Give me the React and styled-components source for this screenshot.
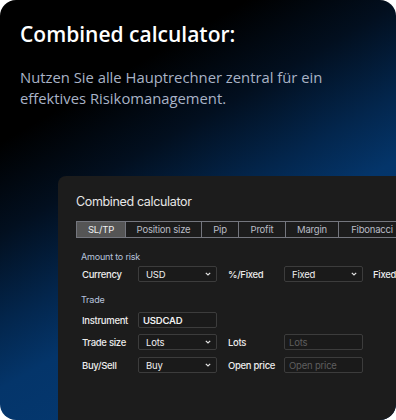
import React from 'react';
import styled, { createGlobalStyle } from 'styled-components';

const Global = createGlobalStyle`
  html, body {
    margin: 0;
    padding: 0;
    background: #ffffff;
  }
`

const Card = styled.div`
  width: 396px;
  height: 420px;
  border-radius: 16px;
  overflow: hidden;
  display: flex;
  flex-direction: column;
  background: linear-gradient(150deg, #000000 22%, #020f1f 36%, #03264d 50%, #04356a 60%, #053d7a 100%);
`

const Intro = styled.div`
  padding: 20px 20px 0 20px;
`

const Heading = styled.h1`
  margin: 0;
  font-family: 'Open Sans', sans-serif;
  font-weight: 600;
  font-size: 21px;
  line-height: 28px;
  color: #ffffff;
`

const Lead = styled.p`
  margin: 19px 0 0 0;
  font-family: 'Open Sans', sans-serif;
  font-size: 14.8px;
  line-height: 21px;
  color: #a9b3c6;
`

const Panel = styled.div`
  margin: 67px 0 0 58px;
  flex: 1;
  width: 400px;
  background: #1c1c1c;
  border-radius: 8px 0 0 0;
  padding: 17px 0 0 18px;
  font-family: 'Inter', sans-serif;
  color: #e4e4e4;
`

const PanelTitle = styled.div`
  font-size: 12.5px;
  letter-spacing: -0.35px;
  color: #e6e6e6;
  line-height: 18px;
`

const Tabs = styled.div`
  display: flex;
  margin-top: 10px;
  border: 1px solid #74767e;
  border-right: none;
  width: max-content;
`

const Tab = styled.div`
  width: ${p => p.w}px;
  height: 15px;
  display: flex;
  align-items: center;
  justify-content: center;
  font-size: 9.5px;
  letter-spacing: -0.2px;
  color: ${p => (p.active ? '#f0f0f0' : '#babdc6')};
  background: ${p => (p.active ? '#555555' : 'transparent')};
  border-right: 1px solid #74767e;
`

const Section = styled.div`
  margin: ${p => p.top}px 0 0 5px;
  font-size: 9px;
  letter-spacing: -0.2px;
  color: #b7c3dc;
  line-height: 12px;
`

const Row = styled.div`
  display: grid;
  grid-template-columns: 56px 90px 56px 89px auto;
  align-items: center;
  margin: ${p => p.top}px 0 0 6px;
  height: 16px;
`

const Label = styled.span`
  font-size: 9.5px;
  font-weight: 500;
  letter-spacing: -0.3px;
  color: #ececec;
  white-space: nowrap;
`

const Box = styled.div`
  box-sizing: border-box;
  width: 79px;
  height: 16px;
  border: 1px solid #3c3c3c;
  border-radius: 2px;
  background: #1a1a1a;
  display: flex;
  align-items: center;
  justify-content: space-between;
  padding: 0 5px 0 ${p => (p.input ? 4 : 7)}px;
  font-size: 9.5px;
  letter-spacing: -0.2px;
  color: ${p => (p.placeholder ? '#5e5e5e' : '#f0f0f0')};
  font-weight: ${p => (p.strong ? 600 : 400)};
`

const Chevron = () => (
  <svg width="6" height="4" viewBox="0 0 6 4">
    <polyline points="0.8,0.8 3,3 5.2,0.8" fill="none" stroke="#e0e0e0" strokeWidth="1.2" />
  </svg>
)

const Select = ({ children }) => (
  <Box>
    <span>{children}</span>
    <Chevron />
  </Box>
)

const tabs = [
  ['SL/TP', 48],
  ['Position size', 75],
  ['Pip', 36],
  ['Profit', 46],
  ['Margin', 52],
  ['Fibonacci', 66],
]

export default function App() {
  return (
    <>
      <Global />
      <Card>
        <Intro>
          <Heading>Combined calculator:</Heading>
          <Lead>
            Nutzen Sie alle Hauptrechner zentral für ein
            <br />
            effektives Risikomanagement.
          </Lead>
        </Intro>
        <Panel>
          <PanelTitle>Combined calculator</PanelTitle>
          <Tabs>
            {tabs.map(([name, w], i) => (
              <Tab key={name} w={w} active={i === 0}>{name}</Tab>
            ))}
          </Tabs>
          <Section top={13}>Amount to risk</Section>
          <Row top={3}>
            <Label>Currency</Label>
            <Select>USD</Select>
            <Label>%/Fixed</Label>
            <Select>Fixed</Select>
            <Label>Fixed amount</Label>
          </Row>
          <Section top={12}>Trade</Section>
          <Row top={6}>
            <Label>Instrument</Label>
            <Box input strong>USDCAD</Box>
          </Row>
          <Row top={6}>
            <Label>Trade size</Label>
            <Select>Lots</Select>
            <Label>Lots</Label>
            <Box input placeholder>Lots</Box>
          </Row>
          <Row top={7}>
            <Label>Buy/Sell</Label>
            <Select>Buy</Select>
            <Label>Open price</Label>
            <Box input placeholder>Open price</Box>
          </Row>
        </Panel>
      </Card>
    </>
  );
}
